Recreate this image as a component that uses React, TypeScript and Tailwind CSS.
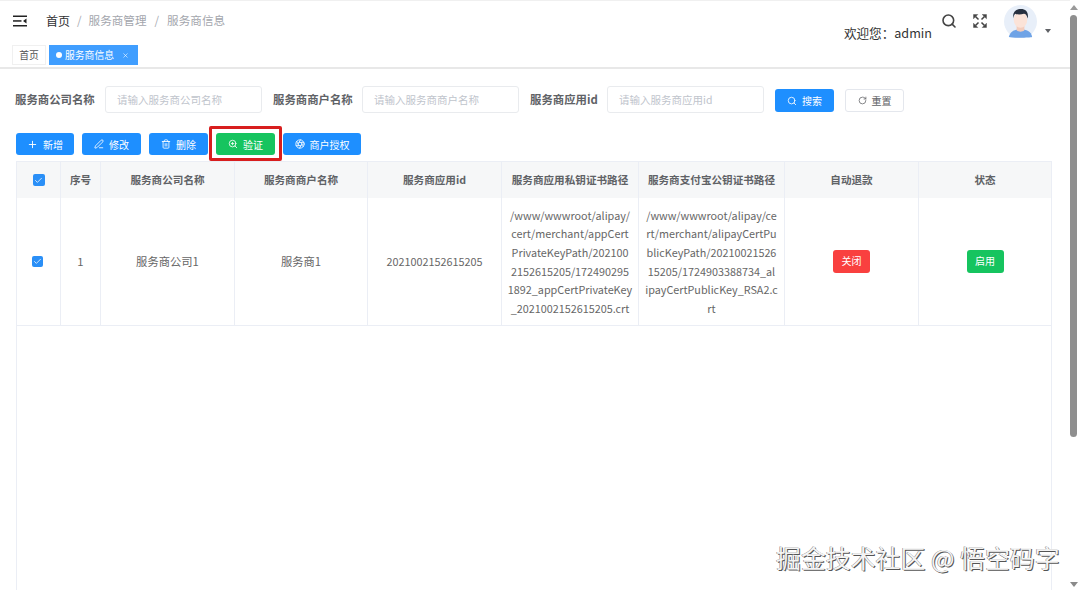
import React from 'react';
import { Check, Plus, RotateCw, Search, PenLine, Trash2, ZoomIn, Aperture, X } from 'lucide-react';

const columns = 'grid grid-cols-[44px_40px_134px_133px_134px_137px_146px_134px_132px]';
const headers = ['服务商公司名称', '服务商商户名称', '服务商应用id', '服务商应用私钥证书路径', '服务商支付宝公钥证书路径', '自动退款', '状态'];

function Avatar() {
  return (
    <svg viewBox="0 0 34 34" className="h-[33px] w-[33px]">
      <circle cx="17" cy="17" r="17" fill="#e8eff9" />
      <path d="M5 33c1-6 6-8 12-8s11 2 12 8c-3 1-21 1-24 0z" fill="#6fa3e6" />
      <path d="M13 20h8v6c-2 2-6 2-8 0z" fill="#f3cdbd" />
      <ellipse cx="17" cy="15" rx="7" ry="8.5" fill="#fbe3d8" />
      <path d="M9.500 14c-1-7 3-10 8-10 5 0 8 3 7 10-1-3-2-5-4-5-3 1-7 1-9 0-1 1-2 3-2 5z" fill="#27303f" />
    </svg>
  );
}

function MenuIcon() {
  return (
    <svg viewBox="0 0 14 12" className="h-3 w-[14px]" fill="#222">
      <rect x="0" y="0.500" width="14" height="1.500" />
      <rect x="0" y="5.200" width="8.500" height="1.500" />
      <rect x="0" y="10" width="14" height="1.500" />
      <path d="M13.500 3.500v5l-3.500-2.500z" />
    </svg>
  );
}

function ExpandIcon() {
  return (
    <svg viewBox="0 0 14 14" className="h-[14px] w-[14px]" fill="#444" stroke="#444" strokeWidth="1.500">
      <path d="M0.500 0.500h4.300l-4.300 4.300z" strokeWidth="0.400" />
      <path d="M13.500 0.500h-4.300l4.300 4.300z" strokeWidth="0.400" />
      <path d="M0.500 13.500h4.300l-4.300-4.300z" strokeWidth="0.400" />
      <path d="M13.500 13.500h-4.300l4.300-4.300z" strokeWidth="0.400" />
      <path d="M2.500 2.500l3 3M11.500 2.500l-3 3M2.500 11.500l3-3M11.500 11.500l-3-3" fill="none" />
    </svg>
  );
}

function Field({ label, placeholder, labelWidth }: { label: string; placeholder: string; labelWidth: string }) {
  return (
    <div className="flex items-center">
      <span className={`text-[11.400px] font-bold whitespace-nowrap text-[#606266] ${labelWidth}`}>{label}</span>
      <div className="flex h-[27px] w-[157px] items-center rounded-[3px] border border-[#e9ebee] bg-white pl-[11px] text-[10.500px] text-[#c0c4cc]">
        {placeholder}
      </div>
    </div>
  );
}

function ToolButton({ icon, text, green, width }: { icon: React.ReactNode; text: string; green?: boolean; width: string }) {
  return (
    <div className={`flex h-[22px] items-center justify-center gap-[5px] rounded-[3px] text-[10px] text-white ${width} ${green ? 'bg-[#16c45f]' : 'bg-[#1e8fff]'}`}>
      {icon}
      <span>{text}</span>
    </div>
  );
}

function TableCheckbox({ small }: { small?: boolean }) {
  return (
    <div className={`flex items-center justify-center rounded-[2px] bg-[#2a8ff7] ${small ? 'mr-[3px] h-[11px] w-[11px]' : 'h-[12px] w-[12px]'}`}>
      <Check size={9} color="#fff" strokeWidth={2} />
    </div>
  );
}

function BodyCell({ children, last, small }: { children: React.ReactNode; last?: boolean; small?: boolean }) {
  return (
    <div className={`flex items-center justify-center border-[#ebeef5] text-center leading-[18.600px] text-[#666] ${small ? 'text-[10.800px]' : 'text-[11.300px]'} ${last ? '' : 'border-r'}`}>
      {children}
    </div>
  );
}

export default function App() {
  return (
    <div className="relative flex h-[590px] w-[1080px] overflow-hidden bg-white font-['Noto_Sans_CJK_SC','Noto_Sans',sans-serif]">
      <div className="flex w-[1070px] flex-col">
        {/* top bar */}
        <div className="flex h-[45px] items-start justify-between border-t border-[#f0f0f0] pl-[13px]">
          <div className="mt-[11px] flex h-[18px] items-center text-[11.600px]">
            <MenuIcon />
            <span className="ml-[19px] text-[12px] text-[#303133]">首页</span>
            <span className="mx-[7px] text-[#a8abb2]">/</span>
            <span className="text-[#a3a6ad]">服务商管理</span>
            <span className="mx-[8px] text-[#a8abb2]">/</span>
            <span className="text-[#a3a6ad]">服务商信息</span>
          </div>
          <div className="flex items-start pr-[19px]">
            <span className="mt-[23px] text-[12.600px] leading-[18px] text-[#333]">欢迎您：admin</span>
            <Search size={16} color="#444" strokeWidth={2.400} className="ml-[9px] mt-[12px]" />
            <div className="ml-[16px] mt-[13px]"><ExpandIcon /></div>
            <div className="ml-[17px] mt-[4px]"><Avatar /></div>
            <div className="ml-[8px] mt-[28px] h-0 w-0 border-x-[3px] border-t-[4px] border-x-transparent border-t-[#606266]" />
          </div>
        </div>

        {/* tab strip */}
        <div className="flex h-[24px] items-start gap-[3px] border-b-2 border-[#e8e8e8] pl-[12px]">
          <div className="flex h-[20px] w-[34px] items-center justify-center border border-[#f0f0f0] text-[9.800px] text-[#555]">首页</div>
          <div className="flex h-[20px] w-[89px] items-center gap-[3px] bg-[#409eff] pl-[7px] text-[9.800px] text-white">
            <span className="h-[6px] w-[6px] rounded-full bg-white" />
            <span>服务商信息</span>
            <X size={7} className="ml-[5px]" />
          </div>
        </div>

        {/* search row */}
        <div className="mt-[17px] flex h-[27px] items-center pl-[15px]">
          <Field label="服务商公司名称" placeholder="请输入服务商公司名称" labelWidth="w-[90px]" />
          <div className="ml-[11px]"><Field label="服务商商户名称" placeholder="请输入服务商商户名称" labelWidth="w-[89px]" /></div>
          <div className="ml-[11px]"><Field label="服务商应用id" placeholder="请输入服务商应用id" labelWidth="w-[77px]" /></div>
          <div className="ml-[11px] mt-[2px] flex h-[23px] w-[59px] items-center justify-center gap-[5px] rounded-[3px] bg-[#1e8fff] text-[10px] text-white">
            <Search size={10} />
            <span>搜索</span>
          </div>
          <div className="ml-[11px] mt-[2px] flex h-[23px] w-[59px] items-center justify-center gap-[5px] rounded-[3px] border border-[#e4e7ed] text-[10px] text-[#606266]">
            <RotateCw size={9} />
            <span>重置</span>
          </div>
        </div>

        {/* toolbar */}
        <div className="mt-[20px] flex gap-[8px] pl-[16px]">
          <ToolButton width="w-[58px]" text="新增" icon={<Plus size={11} />} />
          <ToolButton width="w-[59px]" text="修改" icon={<PenLine size={10} />} />
          <ToolButton width="w-[59px]" text="删除" icon={<Trash2 size={10} />} />
          <div className="relative">
            <ToolButton width="w-[59px]" green text="验证" icon={<ZoomIn size={10} />} />
            <div className="absolute left-[-7px] top-[-7px] h-[35px] w-[73px] rounded-[2px] border-[3px] border-[#d81e1e]" />
          </div>
          <ToolButton width="w-[78px]" text="商户授权" icon={<Aperture size={10} />} />
        </div>

        {/* table */}
        <div className="ml-[16px] mt-[6px] flex w-[1036px] flex-1 flex-col border-x border-[#ebeef5]">
          <div className={`${columns} h-[37px] border-t border-[#ebeef5] bg-[#f6f7f8] text-[10.600px] font-bold text-[#606266]`}>
            <div className="flex items-center justify-center border-r border-[#ebeef5]"><TableCheckbox /></div>
            <div className="flex items-center justify-center border-r border-[#ebeef5]">序号</div>
            {headers.map((h, i) => (
              <div key={h} className={`flex items-center justify-center border-[#ebeef5] ${i < headers.length - 1 ? 'border-r' : ''}`}>{h}</div>
            ))}
          </div>
          <div className={`${columns} h-[128px] border-b border-[#ebeef5]`}>
            <BodyCell><TableCheckbox small /></BodyCell>
            <BodyCell>1</BodyCell>
            <BodyCell>服务商公司1</BodyCell>
            <BodyCell>服务商1</BodyCell>
            <BodyCell small>2021002152615205</BodyCell>
            <BodyCell small>
              <span>
                /www/wwwroot/alipay/<br />cert/merchant/appCert<br />PrivateKeyPath/202100<br />2152615205/172490295<br />1892_appCertPrivateKey<br />_2021002152615205.crt
              </span>
            </BodyCell>
            <BodyCell small>
              <span>
                /www/wwwroot/alipay/ce<br />rt/merchant/alipayCertPu<br />blicKeyPath/20210021526<br />15205/1724903388734_al<br />ipayCertPublicKey_RSA2.c<br />rt
              </span>
            </BodyCell>
            <BodyCell>
              <div className="flex h-[23px] w-[37px] items-center justify-center rounded-[3px] bg-[#f9403f] text-[10px] text-white">关闭</div>
            </BodyCell>
            <BodyCell last>
              <div className="flex h-[23px] w-[37px] items-center justify-center rounded-[3px] bg-[#16c45f] text-[10px] text-white">启用</div>
            </BodyCell>
          </div>
        </div>
      </div>

      {/* scrollbar */}
      <div className="flex w-[10px] flex-col items-start">
        <div className="mt-[5px] h-0 w-0 border-x-[4px] border-b-[5px] border-x-transparent border-b-[#9a9a9a]" />
        <div className="mt-[5px] h-[422px] w-[7px] rounded-[4px] bg-[#8f8f8f]" />
        <div className="mt-[145px] h-0 w-0 border-x-[4px] border-t-[5px] border-x-transparent border-t-[#8a8a8a]" />
      </div>

      {/* watermark */}
      <div className="absolute left-[776px] top-[540px] text-[24.900px] leading-[34px] whitespace-nowrap text-[#f4f4f4] [text-shadow:1px_1px_0_#555,-0.500px_-0.500px_0_#777]">
        掘金技术社区 @ 悟空码字
      </div>
    </div>
  );
}
